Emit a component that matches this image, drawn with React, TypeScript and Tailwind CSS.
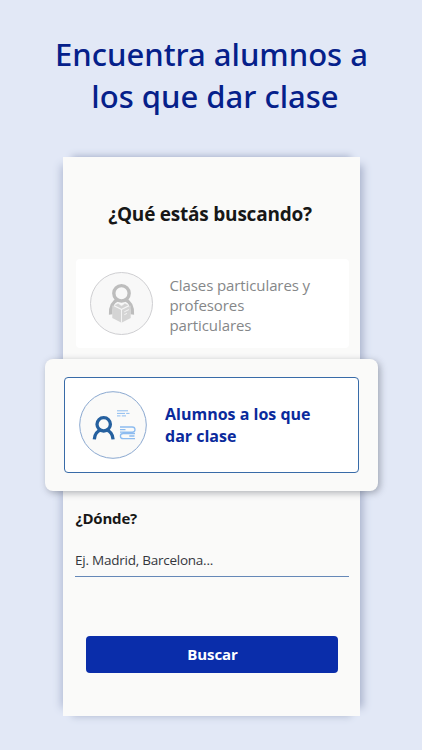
import React from "react";

function TeacherIcon() {
  return (
    <svg className="block h-16 w-16 shrink-0" viewBox="0.5 0.5 64 64" fill="none">
      <circle cx="32" cy="32" r="31" fill="#f8f8f8" stroke="#cfcfd2" strokeWidth="1" />
      <circle cx="32" cy="21.8" r="7.7" stroke="#bdbdbd" strokeWidth="3.4" />
      <path d="M21.2 43C20.6 35 24 30 27.8 28.4M36.2 28.4C40 30 43.4 35 42.8 43" stroke="#bdbdbd" strokeWidth="3.6" />
      <path d="M22.8 34L32 38.6L41.2 34V46.5L32 51.3L22.8 46.5Z" fill="#d4d4d4" />
      <path d="M24.5 33.8L28.6 31.8L32 34.2L35.4 31.8L39.5 33.8L32 37.6Z" fill="#d2d2d2" stroke="#f5f5f5" strokeWidth=".5" />
      <path d="M32 38V51.3M34.8 40.3L39.4 38.1M34.8 43.2L37.5 41.9" stroke="#f7f7f7" strokeWidth=".9" />
    </svg>
  );
}

function StudentIcon() {
  return (
    <svg className="block h-[68px] w-[68px] shrink-0" viewBox="0 0 68 68" fill="none">
      <circle cx="34" cy="34" r="33.3" fill="#fafaf9" stroke="#8aa8d0" strokeWidth="1" />
      <circle cx="24.7" cy="33.3" r="6.7" stroke="#25609f" strokeWidth="3.3" />
      <path d="M15.3 48.3C15.6 43.5 18.5 40 22 39M27.4 39C31 40 33.7 43.5 34.1 48.3" stroke="#25609f" strokeWidth="3.3" />
      <path d="M38 19.8H49M38 22.4H46M47.2 22.4H50.5M38 24.9H41.5M42.8 24.9H47" stroke="#8dbcf0" strokeWidth="1" />
      <path d="M41 36H53.2Q56 36 56 38.8Q56 41.2 53.2 41.2H41M41 38.7H46.5M56 42.5H44.2Q41.4 42.5 41.4 45Q41.4 47.7 44.2 47.7H56M50.3 45H55.5" stroke="#8dbcf0" strokeWidth="1.3" />
    </svg>
  );
}

export default function App() {
  return (
    <main className="flex h-[750px] w-[422px] flex-col items-center overflow-hidden bg-[#e2e8f6] font-['Open_Sans',sans-serif]">
      <h1 className="mt-[33px] h-[123.5px] whitespace-nowrap pl-px text-center font-['Noto_Sans',sans-serif] text-[31px] font-medium leading-[42px] text-[#05208a]">
        Encuentra alumnos a
        <br />
        <span className="pl-[7px]">los que dar clase</span>
      </h1>
      <section className="flex h-[559.5px] w-[297px] flex-col bg-[#fafaf9] pl-px shadow-[11px_0_8px_-8px_#a9b2cb,-10px_0_8px_-8px_#b3bcd5,0_-10px_7px_-9px_#a9b2cb,0_10px_7px_-9px_#b8c0d6]">
        <h2 className="mt-[44.5px] pr-[3px] text-center text-[19px] font-bold leading-[26px] tracking-[-0.22px] text-[#171717]">¿Qué estás buscando?</h2>
        <div className="ml-3 mr-[11px] mt-8 flex h-[89px] shrink-0 items-center rounded bg-white pl-3.5">
          <TeacherIcon />
          <p className="ml-4 mt-0.5 whitespace-nowrap text-[15px] leading-5 tracking-[-0.1px] text-[#858789]">
            Clases particulares y<br />profesores<br />particulares
          </p>
        </div>
        <div className="-ml-[19px] -mr-[18px] mt-[11px] h-[132px] shrink-0 rounded-lg bg-[#fafaf9] pl-[19px] pr-[19px] pt-[18px] shadow-[2px_2px_7px_0_rgba(60,65,80,0.4)]">
          <div className="flex h-24 items-center rounded border border-[#386ba8] bg-white pl-3.5">
            <StudentIcon />
            <p className="ml-[18.5px] whitespace-nowrap text-[16px] font-bold leading-[22px] text-[#0a2a9c]">
              Alumnos a los que<br />dar clase
            </p>
          </div>
        </div>
        <label className="ml-3 mt-4 pb-px text-[15px] font-bold leading-[22px] tracking-[-0.2px] text-[#171717]">¿Dónde?</label>
        <div className="ml-[11px] mr-[11px] mt-[19px] h-[28px] shrink-0 border-b border-[#6588b8] pl-[0.5px] text-[13.5px] leading-[22px] tracking-[-0.24px] text-[#34373d]">Ej. Madrid, Barcelona...</div>
        <button className="ml-[22.5px] mt-[59px] h-[37px] w-[252px] shrink-0 rounded bg-[#0a2daa] pl-px text-[15px] font-bold tracking-[-0.1px] text-white">Buscar</button>
      </section>
    </main>
  );
}
